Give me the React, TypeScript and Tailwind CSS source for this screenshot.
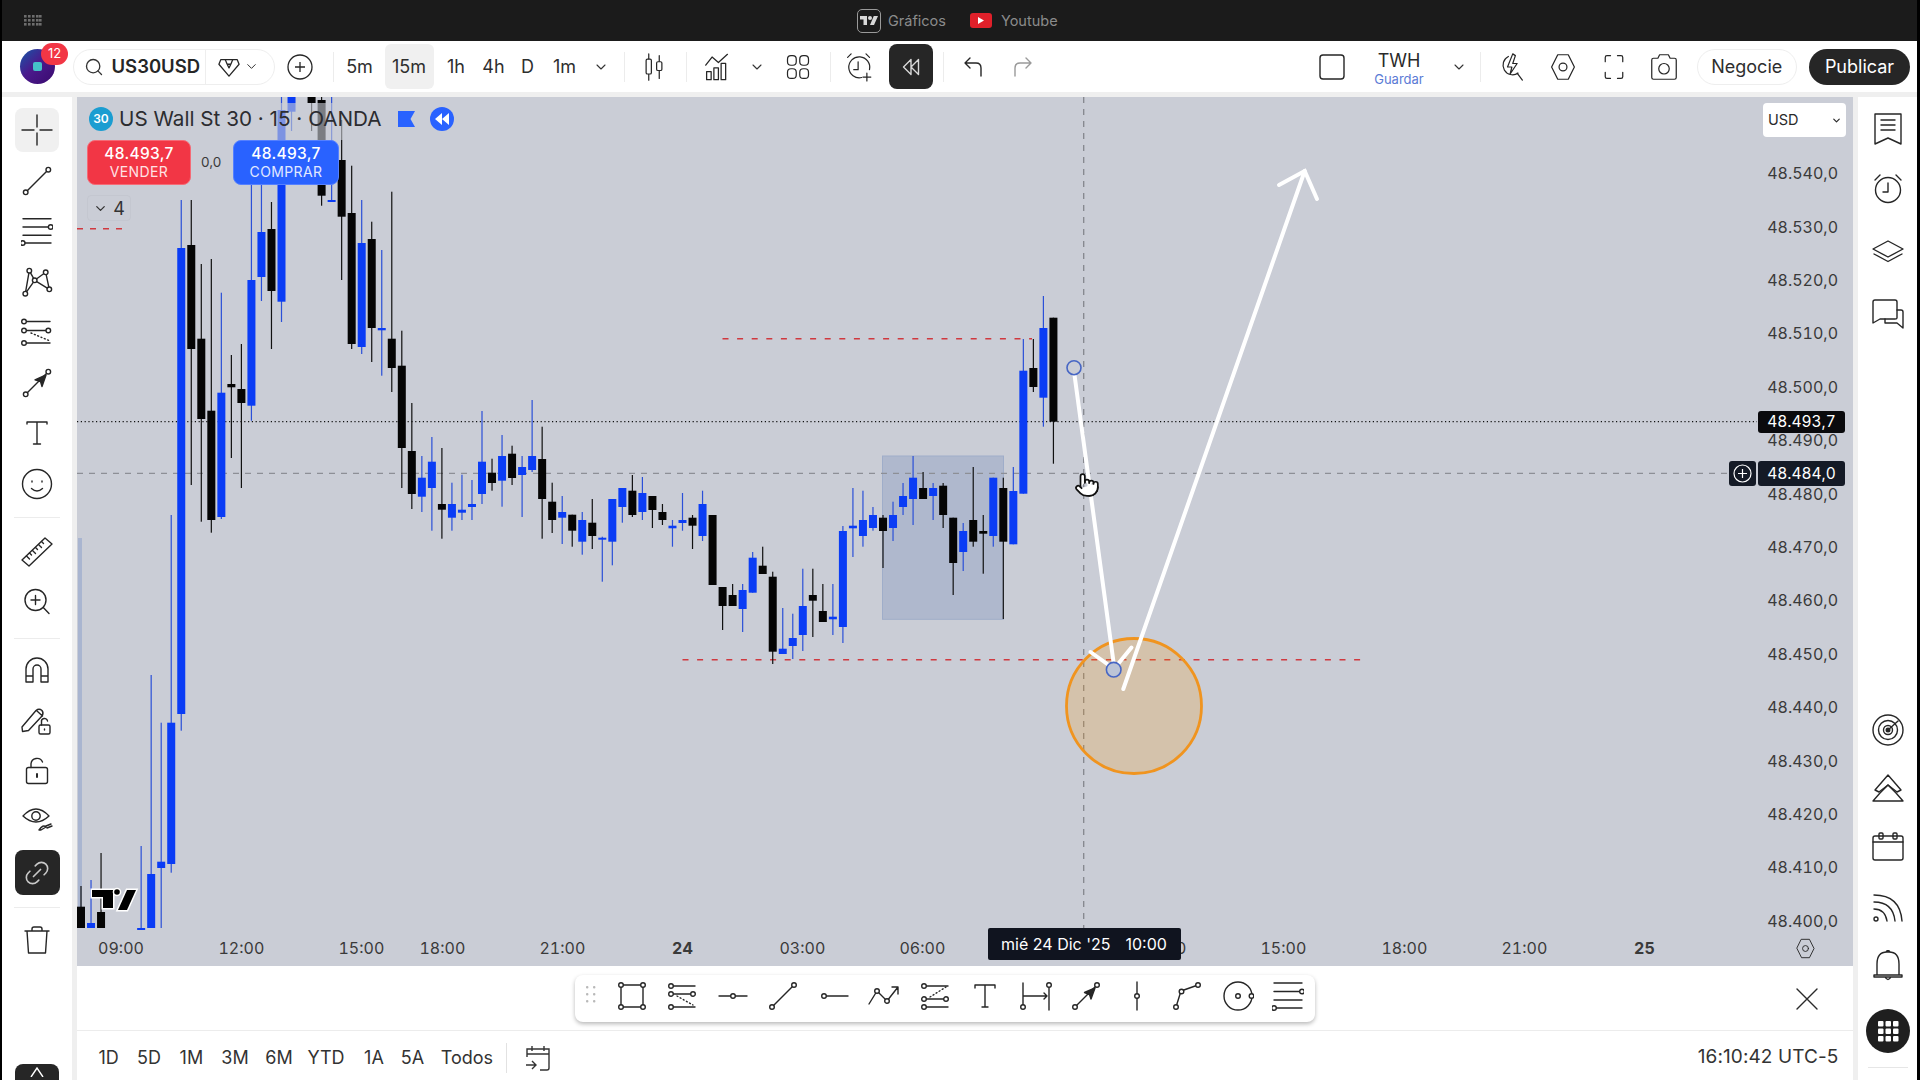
import React from "react";
import { ChevronDown, Pointer, Link2, Search } from "lucide-react";

type Kid = React.ReactNode;
function I({ s = 32, c = "#262626", w = 1.4, vb = "-16 -16 32 32", children }: { s?: number; c?: string; w?: number; vb?: string; children: Kid }) {
  return (
    <svg width={s} height={s} viewBox={vb} fill="none" stroke={c} strokeWidth={w} strokeLinecap="round" strokeLinejoin="round">
      {children}
    </svg>
  );
}
const D = ({ x, y, r = 2.3 }: { x: number; y: number; r?: number }) => <circle cx={x} cy={y} r={r} fill="#fff" />;

const Cross = () => <I><path d="M0-15V-3M0 3V15M-15 0H-3M3 0H15" /></I>;
const Trend = () => <I><path d="M-10 10L10-10" /><D x={-11.3} y={11.3} /><D x={11.3} y={-11.3} /></I>;
const FibLines = () => <I><path d="M-14-12.3H14M-14-4H12M-14 4.3H14M-12 12H14" /><D x={13.7} y={-4} /><D x={-14.3} y={12} /></I>;
const Xabcd = () => <I><path d="M-11.7 11.7L-7.7-11.3L-2.3-1.7L8.7-9.7L12.3 7.3L-2.3-1.7L-11.7 11.7ZM-7.7-11.3" /><D x={-11.7} y={11.7} /><D x={-7.7} y={-11.3} /><D x={-2.3} y={-1.7} /><D x={8.7} y={-9.7} /><D x={12.3} y={7.3} /></I>;
const Gann = () => <I><path d="M-12-10.5H13M-12-1.5H11M-12 11H13" /><path d="M-6 1L12 8.5" strokeDasharray="1 2.6" /><D x={-13} y={-10.5} /><D x={-13} y={-1.5} /><D x={11.3} y={-1.5} /><D x={-13} y={11} /></I>;
const ArrowTool = () => <I><path d="M-10 10L10-10" /><path d="M9-8L5 3.5L3.5-1.5L-2-3.2Z" fill="#262626" /><D x={-11.3} y={11.3} /><D x={11.3} y={-11.3} /></I>;
const TextT = () => <I><path d="M-10-9V-11H10V-9M0-11V11M-3.5 11H3.5" /></I>;
const Smile = () => <I><circle r={14.5} /><path d="M-5-3V-2M5-3V-2M-5.5 4.5Q0 9.5 5.5 4.5" /></I>;
const Ruler = () => <I><path d="M-15 8L8-14L15-8L-8 14Z" /><path d="M-10.5 4L-7.5 7M-7.5 1L-5.5 3M-4.5-1.5L-1.5 1.5M-1.5-4.5L.5-2.5M1.5-7.5L4.5-4.5M4.5-10.5L6.5-8.5" /></I>;
const ZoomI = () => <I><circle cx={-1.5} cy={-2} r={10.5} /><path d="M6.3 5.5L12 11.5M-1.5-6.5V2.5M-6-2H3" /></I>;
const Magnet = () => <I><path d="M-11 12V-1A11 11 0 0 1 11-1V12H4V-1A4 4 0 0 0-4-1V12ZM-11 6H-4M4 6H11" /></I>;
const PencilLock = () => <I><path d="M-15 7L-1-9.5Q2-12 5-9.5Q7-7 5-4L-8.5 10.5L-14.5 11.5ZM0-9L5.5-4" /><rect x={2} y={5} width={11} height={9} rx={1.5} /><path d="M4.5 5V2A3 3 0 0 1 10.5 1" /><path d="M7.5 9V10" /></I>;
const Lock = () => <I><rect x={-10.5} y={-3.5} width={21} height={16} rx={2} /><path d="M-6-3.5V-7A6 6 0 0 1 5.5-9" /><path d="M0 3V6" strokeWidth={2} /></I>;
const Eye = () => <I><path d="M-14-3Q-1-17 12-3Q-1 9-14-3Z" /><circle cx={-1} cy={-3} r={4.2} /><path d="M2 11Q6 5 9 8L4 11ZM9 7L14 5M10 9L15 7" /></I>;
const Trash = () => <I><path d="M-12-9H12M-10-9L-8.5 13H8.5L10-9M-5-9V-11Q-5-13-3-13H3Q5-13 5-11V-9" /></I>;

const Watch = () => <I><path d="M-13-15H13V15L0 9L-13 15Z" /><path d="M-7-9H7M-7-4H7M-7 1H7" /></I>;
const AlarmI = () => <I><circle cy={1} r={12.5} /><path d="M0-6V3H-5M-13-9L-8-14M13-9L8-14" /></I>;
const Layers = () => <I><path d="M0-10L15-2L0 6L-15-2Z" /><path d="M-14 3L0 10.5L14 3" /></I>;
const Chat = () => <I><path d="M-15-12Q-15-14-13-14H7Q9-14 9-12V4Q9 5 7 5H-8L-15 9Z" /><path d="M9-4H13Q15-4 15-2V14L9 9H-3V5" /></I>;
const Radar = () => <I><circle r={15} /><circle r={9.5} /><circle r={4.5} /><circle r={1.8} fill="#262626" /><path d="M0 0L10-9" /></I>;
const Peaks = () => <I><path d="M-15 14L-8 6L0-2L8 6L15 14M-15 14H15" /><path d="M-13 3L0-12L13 3L9 5L0-2L-9 5Z" /></I>;
const Cal = () => <I><rect x={-15} y={-10} width={30} height={24} rx={2} /><path d="M-15-4H15" /><rect x={-9} y={-13} width={4} height={6} rx={1} /><rect x={5} y={-13} width={4} height={6} rx={1} /></I>;
const Signal = () => <I><circle cx={-12} cy={12} r={2} /><path d="M-14 2Q-3 2-1 14M-14-5Q5-5 7 14M-14-12Q12-12 14 14" /></I>;
const Bell = () => <I><path d="M-11 9V-2Q-11-14-1-14H1Q11-14 11-2V9ZM-14 9H14V11H-14ZM-3 11Q0 16 3 11M-2-14Q0-17 2-14" /></I>;
const DotsGrid = () => <svg width={24} height={24} viewBox="0 0 24 24" fill="#fff"><rect x="2" y="2" width="5.5" height="5.5" rx="1" /><rect x="9.5" y="2" width="5.5" height="5.5" rx="1" /><rect x="17" y="2" width="5.5" height="5.5" rx="1" /><rect x="2" y="9.5" width="5.5" height="5.5" rx="1" /><rect x="9.5" y="9.5" width="5.5" height="5.5" rx="1" /><rect x="17" y="9.5" width="5.5" height="5.5" rx="1" /><rect x="2" y="17" width="5.5" height="5.5" rx="1" /><rect x="9.5" y="17" width="5.5" height="5.5" rx="1" /><rect x="17" y="17" width="5.5" height="5.5" rx="1" /></svg>;

const Gem = () => <I s={22} vb="-12 -12 24 24"><path d="M-9-8H9L11-3L0 10L-11-3Z" /><path d="M-4-8L-2-3L0 1L2-3L4-8M-2-3H2" /></I>;
const CandleI = () => <I><path d="M-6-15V15M6-13V13" /><rect x={-9} y={-9} width={6} height={17} rx={1.5} fill="#fff" /><rect x={3} y={-6} width={6} height={10} rx={1.5} fill="#fff" /></I>;
const ChartI = () => <I><path d="M-13-2L-6-11L1-5L11-14" /><rect x={-12} y={5} width={5} height={9} /><rect x={-4} y={1} width={5} height={13} /><rect x={4} y={-4} width={5} height={18} /></I>;
const Four = () => <I><rect x={-12} y={-13} width={10} height={11} rx={4} /><rect x={2} y={-13} width={10} height={11} rx={4} /><rect x={-12} y={2} width={10} height={11} rx={4} /><rect x={2} y={2} width={10} height={11} rx={4} /></I>;
const AlarmPlus = () => <I><path d="M3 12A12 12 0 1 1 12 3" /><path d="M-1-6V3H-6M-13-11L-9-15M12-11L8-15M9 7V16M4.5 11.5H13.5" /></I>;
const Rewind = () => <svg width={22} height={22} viewBox="0 0 22 22" fill="none" stroke="#d8d8d8" strokeWidth={1.4} strokeLinejoin="round"><path d="M11 3.5L3.5 11L11 18.5ZM18.5 3.5L11 11L18.5 18.5Z" /></svg>;
const Undo = ({ c = "#262626" }: { c?: string }) => <I s={24} c={c} vb="-12 -12 24 24"><path d="M-8-4L-3-9M-8-4L-3 1M-8-4H3Q8-4 8 1V9" /></I>;
const Redo = ({ c = "#9a9a9a" }: { c?: string }) => <I s={24} c={c} vb="-12 -12 24 24"><path d="M8-4L3-9M8-4L3 1M8-4H-3Q-8-4-8 1V9" /></I>;
const Bolt = () => <I><path d="M8 7A11 11 0 1 1 -3-12M7 7L13 15" /><path d="M2-15L-4 0H1L-1 8L7-4H2L5-13Z" fill="#fff" /></I>;
const Hex = ({ s = 32 }: { s?: number }) => <I s={s}><path d="M-6-14H6L13 0L6 14H-6L-13 0Z" /><circle r={4.5} /></I>;
const Full = () => <I><path d="M-10-6V-11Q-10-13-8-13H-4M4-13H8Q10-13 10-11V-6M10 6V11Q10 13 8 13H4M-4 13H-8Q-10 13-10 11V6" /></I>;
const Camera = () => <I><path d="M-14-8Q-14-10-12-10H-7L-5-14H5L7-10H12Q14-10 14-8V12Q14 14 12 14H-12Q-14 14-14 12Z" /><circle cy={2} r={6} /></I>;

const B1 = () => <I><rect x={-11} y={-11} width={22} height={22} /><D x={-11} y={-11} /><D x={11} y={-11} /><D x={-11} y={11} /><D x={11} y={11} /></I>;
const B2 = () => <I><path d="M-11-10H13M-11-2H11M-11 11H13" /><path d="M-5 0L11 9" strokeDasharray="1 2.6" /><D x={-11} y={-10} /><D x={-11} y={-2} /><D x={11} y={-2} /><D x={-11} y={11} /></I>;
const B3 = () => <I><path d="M-14 0H14" /><D x={0} y={0} /></I>;
const B4 = () => <I><path d="M-11 11L11-11" /><D x={-11} y={11} /><D x={11} y={-11} /></I>;
const B5 = () => <I><path d="M-10 0H14" /><D x={-10} y={0} /></I>;
const B6 = () => <I><path d="M-15 8L-7-5L3 5L14-9M8-9H14V-2" /><D x={-7} y={-5} /><D x={3} y={5} /></I>;
const B7 = () => <I><path d="M-11-10H13M-11 3H11M-11 11H13" /><path d="M-5 1L11-9" strokeDasharray="1 2.6" /><D x={-11} y={-10} /><D x={-11} y={3} /><D x={11} y={3} /><D x={-11} y={11} /></I>;
const B8 = () => <I><path d="M-10-8V-11H10V-8M0-11V11M-3 11H3" /></I>;
const B9 = () => <I><path d="M-13-13V9M13-8V14M-12 0H11M8-3L11 0L8 3" /><D x={-13} y={11} /><D x={13} y={-11} /></I>;
const B10 = () => <I><path d="M-11 11L11-11" /><path d="M9-8L5 3L3.5-1.5L-1.5-3.5Z" fill="#262626" /><D x={-11} y={11} /><D x={11} y={-11} /></I>;
const B11 = () => <I><path d="M0-14V14" /><D x={0} y={0} /></I>;
const B12 = () => <I><path d="M-11 11L-6-5L11-11" /><D x={-11} y={11} /><D x={-5.5} y={-4.5} /><D x={11} y={-11} /></I>;
const B13 = () => <I><circle r={14} /><D x={0} y={0} /><D x={13.5} y={0} /></I>;
const B14 = () => <I><path d="M-14-13H14M-14-4.5H12M-14 4H14M-12 12H14" /><D x={14} y={-4.5} /><D x={-14} y={12} /></I>;

type C = [string, number, number, number, number];
const candles: Record<number, C> = {
  0: ["k", 886, 906.7, 928, 928], 1: ["b", 880, 923, 928, 928], 2: ["k", 853, 912, 928, 928],
  6: ["b", 846, 928, 928, 928], 7: ["b", 675, 874, 928, 928], 8: ["b", 722.7, 861.7, 868, 928], 9: ["b", 515, 722.7, 864, 872.7],
  10: ["b", 200, 248, 714, 730.7], 11: ["k", 200, 245, 349, 485], 12: ["k", 264, 338.7, 419, 521.7], 13: ["k", 259, 410.7, 520, 532.7],
  14: ["b", 292.7, 392.7, 517, 519], 15: ["k", 355, 384, 387.3, 458], 16: ["k", 344, 389, 403, 488], 17: ["b", 185, 280, 405.7, 420.7],
  18: ["b", 185, 232, 277, 301], 19: ["k", 202, 229, 291, 349], 20: ["b", 97, 110, 301.7, 322], 21: ["b", 97, 97, 111.7, 131],
  23: ["k", 97, 97, 103, 131], 24: ["k", 97, 100, 195.7, 205.7], 25: ["b", 97, 200, 200, 200],
  26: ["k", 120, 160, 216.7, 280], 27: ["k", 165.7, 213, 344, 349], 28: ["b", 200, 243, 347, 354], 29: ["k", 221.7, 239, 328, 362],
  30: ["b", 250, 328, 330.3, 375.7], 31: ["k", 191.7, 338.7, 368, 392], 32: ["k", 330.7, 365.7, 448, 488], 33: ["k", 403, 451, 494, 509],
  34: ["b", 456, 477.7, 496.7, 512], 35: ["b", 437, 461.7, 488, 530.7], 36: ["k", 448, 504, 509.7, 538.7], 37: ["b", 482.7, 504, 517.7, 530.7],
  38: ["b", 474.7, 509.7, 512.7, 520], 39: ["b", 480, 504, 507, 520], 40: ["b", 411, 461.7, 494, 504], 41: ["k", 458.7, 472.7, 483, 490.7],
  42: ["b", 435, 456, 480.7, 506.7], 43: ["k", 445.7, 453.7, 478, 485], 44: ["b", 456, 467, 475, 517], 45: ["b", 400, 456, 470, 472],
  46: ["k", 426.7, 459, 499, 538.7], 47: ["k", 482.7, 501.7, 520, 533], 48: ["b", 496, 512, 517.7, 544], 49: ["k", 514.7, 514.7, 530.7, 546.7],
  50: ["b", 512, 520, 541.7, 554.7], 51: ["k", 499, 522.7, 536, 549], 52: ["b", 536.7, 537.7, 539.5, 581.7], 53: ["b", 499, 499, 541.7, 565.3],
  54: ["b", 488, 488, 507, 522.7], 55: ["k", 475, 490.7, 515, 517], 56: ["b", 477, 493, 512, 520], 57: ["k", 496, 496, 510, 528],
  58: ["k", 504, 512, 520, 525], 59: ["b", 520, 525.7, 528.3, 546.7], 60: ["b", 493, 520, 523, 530.7], 61: ["k", 515, 517.7, 525.7, 549],
  62: ["b", 490.7, 504, 536, 541], 63: ["k", 515, 515, 585, 585], 64: ["k", 587, 587, 606, 630], 65: ["k", 584, 595, 606, 606],
  66: ["b", 584, 590, 609, 632], 67: ["b", 552, 557.7, 592.7, 592.7], 68: ["k", 546.7, 565.7, 574, 574], 69: ["k", 571.7, 576.7, 651.7, 664],
  70: ["b", 608, 648.7, 654, 654], 71: ["b", 613.7, 638, 646, 659], 72: ["b", 568.7, 606, 635, 651], 73: ["k", 568.7, 595, 600.7, 637],
  74: ["k", 584, 611, 622, 622], 75: ["b", 584, 616.7, 619.3, 635], 76: ["b", 526, 531, 627, 643], 77: ["b", 488, 525.7, 528.3, 557],
  78: ["b", 490.7, 520, 536, 546.7], 79: ["b", 507, 515, 528, 530.7], 80: ["k", 515, 517.7, 531, 568], 81: ["b", 501.7, 515, 528, 541],
  82: ["b", 483, 496, 507, 515], 83: ["b", 456, 477.7, 499, 525], 84: ["k", 472, 488, 499, 499], 85: ["b", 483, 488, 496, 520],
  86: ["k", 483, 485.7, 515, 528], 87: ["k", 517.7, 517.7, 563, 595], 88: ["b", 523, 531, 552, 571], 89: ["k", 467, 520, 541.7, 546.7],
  90: ["k", 515, 531, 533.7, 573.7], 91: ["b", 477.7, 477.7, 536, 546.7], 92: ["k", 477.7, 488, 541.7, 619], 93: ["b", 467, 491, 544.3, 544.3],
  94: ["b", 339, 370.7, 493.7, 493.7], 95: ["k", 339, 368, 387, 392], 96: ["b", 296, 328, 397.7, 426.7], 97: ["k", 317.7, 317.7, 421.7, 463.7],
};

function Chart() {
  return (
    <svg className="absolute inset-0" width={1776} height={869} viewBox="77 97 1776 869">
      <rect x={78} y={538} width={4} height={390} fill="#a9b5d0" />
      <rect x={882.5} y={456} width={121} height={163.3} fill="#7f93bd" fillOpacity={0.36} stroke="#9fadc9" strokeWidth={1} />
      <path d="M77 421.7H1757" stroke="#111" strokeWidth={1.2} strokeDasharray="1.2 2.6" />
      <path d="M77 473.3H1727" stroke="#8d8f96" strokeWidth={1.3} strokeDasharray="6 6" />
      <path d="M1083.7 97V928" stroke="#84868d" strokeWidth={1.3} strokeDasharray="6 6" />
      <path d="M77 228.7H122" stroke="#d0393f" strokeWidth={1.6} strokeDasharray="6 7" />
      <path d="M722.5 338.7H1032" stroke="#d0393f" strokeWidth={1.6} strokeDasharray="6 8.6" />
      <path d="M682.5 659.7H1363" stroke="#d0393f" strokeWidth={1.6} strokeDasharray="6 8.6" />
      {Object.entries(candles).map(([k, [col, wt, bt, bb, wb]]) => {
        const x = 81 + Number(k) * 10.025;
        const fill = col === "b" ? "#0a3cf5" : "#050505";
        const wick = col === "b" ? "#2b50d8" : "#111";
        return (
          <g key={k}>
            <rect x={x - 0.6} y={wt} width={1.2} height={wb - wt} fill={wick} />
            <rect x={x - 4} y={bt} width={8} height={Math.max(bb - bt, 2)} fill={fill} />
          </g>
        );
      })}
      <circle cx={1134} cy={706} r={67.5} fill="#ff9800" fillOpacity={0.2} stroke="#f0941f" strokeWidth={2.8} />
      <g stroke="#fff" strokeWidth={4} strokeLinecap="round" fill="none">
        <path d="M1074.5 375L1113.5 662" />
        <path d="M1090.5 652L1110 666M1131.5 647.5L1118 664" />
        <path d="M1123.3 689L1304.7 171" />
        <path d="M1279 185L1304.7 171L1317 199" />
      </g>
      <circle cx={1074} cy={367.7} r={7} fill="#cacdd6" stroke="#4766c4" strokeWidth={1.6} />
      <circle cx={1113.7} cy={669.7} r={7.3} fill="#bcc4d6" stroke="#4766c4" strokeWidth={1.6} />
      <g stroke="#fff" strokeWidth={3} paintOrder="stroke" fill="#000">
        <path d="M92 890H113V908H103V897H92Z" />
        <path d="M118 910L127 890H136L127 910Z" />
        <circle cx={117} cy={892} r={2.8} />
      </g>
    </svg>
  );
}

const prices = ["48.540,0", "48.530,0", "48.520,0", "48.510,0", "48.500,0", "48.490,0", "48.480,0", "48.470,0", "48.460,0", "48.450,0", "48.440,0", "48.430,0", "48.420,0", "48.410,0", "48.400,0"];
const times = [
  ["09:00", "ml-[4px]"], ["12:00", "ml-[40.4px]"], ["15:00", "ml-[40px]"], ["18:00", "ml-[1px]"], ["21:00", "ml-[40px]"], ["24", "ml-[40px] font-bold"], ["03:00", "ml-[40px]"],
  ["06:00", "ml-[40px]"], ["12:00", "ml-[161px]"], ["15:00", "ml-[40px]"], ["18:00", "ml-[41px]"], ["21:00", "ml-[40px]"], ["25", "ml-[40px] font-bold"],
];
const bottomTools = [B1, B2, B3, B4, B5, B6, B7, B8, B9, B10, B11, B12, B13, B14];
const ranges = [
  ["1D", "w-[30px] ml-[16.7px]"], ["5D", "w-[30px] ml-[10.3px]"], ["1M", "w-[36px] ml-[9.4px]"], ["3M", "w-[36px] ml-[7.6px]"], ["6M", "w-[36px] ml-[8px]"], ["YTD", "w-[44px] ml-[7px]"], ["1A", "w-[30px] ml-[11px]"], ["5A", "w-[30px] ml-[8.5px]"], ["Todos", "w-[58px] ml-[10.5px]"],
];

function Slot({ cls, children }: { cls: string; children: Kid }) {
  return <div className={`flex items-center justify-center shrink-0 ${cls}`}>{children}</div>;
}
const VBar = ({ cls }: { cls: string }) => <div className={`w-px h-[30px] bg-[#ececec] shrink-0 ${cls}`} />;
const Chev = ({ cls }: { cls: string }) => <Slot cls={cls}><ChevronDown size={16} strokeWidth={1.6} color="#333" /></Slot>;

export default function App() {
  return (
    <div className="w-[1920px] h-[1080px] overflow-hidden flex flex-col bg-[#efefef] border-l-2 border-r-[3px] border-black text-[#2a2a2a] font-['Inter','Liberation_Sans',sans-serif]">
      {/* window bar */}
      <div className="h-[41px] shrink-0 bg-[#1b1b1b] flex items-center">
        <svg className="ml-[22px]" width={18} height={12} viewBox="0 0 18 12" fill="#6d6d6d">
          {[0, 4, 8].map((y) => [0, 4, 8, 12, 15].map((x) => <rect key={`${x}-${y}`} x={x} y={y} width={2.6} height={2.6} />))}
        </svg>
        <div className="ml-[815px] w-[24px] h-[24px] rounded-[5px] border border-[#9a9a9a] flex items-center justify-center">
          <svg width={18} height={11} viewBox="0 0 36 22" fill="#d8d8d8"><path d="M14 20H7V9H0V2H14ZM28 20H20L27.5 2H36Z" /><circle cx={20} cy={6} r={4} /></svg>
        </div>
        <span className="ml-[7px] text-[14.5px] text-[#8b8b8b]">Gráficos</span>
        <div className="ml-[24px] w-[22px] h-[15px] rounded-[3px] bg-[#e0202a] flex items-center justify-center">
          <svg width={6} height={7} viewBox="0 0 6 7" fill="#fff"><path d="M0 0L6 3.5L0 7Z" /></svg>
        </div>
        <span className="ml-[9px] text-[14.5px] text-[#8b8b8b]">Youtube</span>
      </div>

      {/* top toolbar */}
      <div className="h-[51px] shrink-0 bg-white flex items-center text-[18px] text-[#2e2e2e]">
        <div className="ml-[17.5px] w-[35px] h-[35px] relative shrink-0">
          <div className="w-full h-full rounded-full bg-[linear-gradient(135deg,#1558a8_0%,#4a1a8c_45%,#3a0a6e_100%)] flex items-center justify-center">
            <div className="w-[9px] h-[9px] rounded-[2px] bg-[#45c0c8]" />
          </div>
          <div className="absolute left-[21.5px] -top-[6px] w-[27px] h-[22px] rounded-full bg-[#f23645] text-white text-[13px] flex items-center justify-center">12</div>
        </div>
        <div className="ml-[18px] w-[202px] h-[36px] shrink-0 rounded-full border border-[#eeeeee] flex items-center">
          <Search className="ml-[10px]" size={20} strokeWidth={1.6} color="#333" />
          <span className="ml-[8px] font-semibold text-[18.5px] w-[91px] text-[#262626]">US30USD</span>
          <div className="ml-[2px] w-px h-full bg-[#eeeeee]" />
          <div className="ml-[12px]"><Gem /></div>
          <ChevronDown className="ml-[4px]" size={15} strokeWidth={1.6} color="#333" />
        </div>
        <Slot cls="ml-[12px] w-[27px]"><svg width={26} height={26} viewBox="0 0 26 26" fill="none" stroke="#262626" strokeWidth={1.3}><circle cx={13} cy={13} r={12} /><path d="M13 8V18M8 13H18" /></svg></Slot>
        <VBar cls="ml-[19px]" />
        <Slot cls="ml-[12px] w-[28px]">5m</Slot>
        <Slot cls="ml-[11px] w-[49px] h-[45px] rounded-md bg-[#f0f0f0]">15m</Slot>
        <Slot cls="ml-[7px] w-[31px]">1h</Slot>
        <Slot cls="ml-[6.5px] w-[31px]">4h</Slot>
        <Slot cls="ml-[6.5px] w-[24px]">D</Slot>
        <Slot cls="ml-[9px] w-[32px]">1m</Slot>
        <Chev cls="ml-[12px] w-[17px]" />
        <VBar cls="ml-[14px]" />
        <Slot cls="ml-[15.5px] w-[28px]"><CandleI /></Slot>
        <VBar cls="ml-[18px]" />
        <Slot cls="ml-[16px] w-[29px]"><ChartI /></Slot>
        <Chev cls="ml-[17px] w-[16px]" />
        <Slot cls="ml-[19px] w-[28px]"><Four /></Slot>
        <VBar cls="ml-[18px]" />
        <Slot cls="ml-[14px] w-[28px]"><AlarmPlus /></Slot>
        <Slot cls="ml-[16px] w-[44px] h-[45px] rounded-lg bg-[#262626]"><Rewind /></Slot>
        <VBar cls="ml-[10px]" />
        <Slot cls="ml-[17px] w-[24px]"><Undo /></Slot>
        <Slot cls="ml-[26px] w-[24px]"><Redo /></Slot>

        <Slot cls="ml-auto w-[26px]"><svg width={26} height={26} viewBox="0 0 26 26" fill="none" stroke="#262626" strokeWidth={1.4}><rect x={1} y={1} width={24} height={24} rx={3} /></svg></Slot>
        <div className="ml-[29px] w-[50px] shrink-0 flex flex-col items-center leading-none pt-[5px]">
          <span className="text-[18px] text-[#2a2a2a]">TWH</span>
          <span className="mt-[3px] text-[13px] text-[#5b7bd5]">Guardar</span>
        </div>
        <Chev cls="ml-[27px] w-[16px]" />
        <VBar cls="ml-[13px]" />
        <Slot cls="ml-[15.5px] w-[28px]"><Bolt /></Slot>
        <Slot cls="ml-[24.5px] w-[28px]"><Hex /></Slot>
        <Slot cls="ml-[23px] w-[28px]"><Full /></Slot>
        <Slot cls="ml-[22px] w-[28px]"><Camera /></Slot>
        <Slot cls="ml-[18.5px] w-[100.5px] h-[36px] rounded-full border border-[#eeeeee]">Negocie</Slot>
        <Slot cls="ml-[12px] mr-[7px] w-[101px] h-[36px] rounded-full bg-[#262626] text-white">Publicar</Slot>
      </div>

      <div className="flex-1 min-h-0 flex pt-[5px]">
        {/* left tools */}
        <aside className="w-[70px] shrink-0 bg-white flex flex-col items-center">
          <Slot cls="mt-[11px] w-[44px] h-[44px] rounded-lg bg-[#f0f0f0]"><Cross /></Slot>
          <div className="mt-[3.5px] w-full flex flex-col items-center">
            {[Trend, FibLines, Xabcd, Gann, ArrowTool, TextT, Smile].map((Ic, i) => (
              <Slot key={i} cls="h-[50.5px]"><Ic /></Slot>
            ))}
          </div>
          <div className="mt-[8px] w-[46px] h-px bg-[#ececec]" />
          <Slot cls="mt-[9.5px] h-[49px]"><Ruler /></Slot>
          <Slot cls="h-[50px]"><ZoomI /></Slot>
          <div className="mt-[11px] w-[46px] h-px bg-[#ececec]" />
          <Slot cls="mt-[6px] h-[50px]"><Magnet /></Slot>
          <Slot cls="h-[50px]"><PencilLock /></Slot>
          <Slot cls="h-[52px]"><Lock /></Slot>
          <Slot cls="h-[45.5px]"><Eye /></Slot>
          <Slot cls="mt-[8px] w-[45px] h-[45px] rounded-lg bg-[#262626]"><Link2 size={30} strokeWidth={1.3} color="#c9c9c9" className="-rotate-45" /></Slot>
          <div className="mt-[12px] w-[46px] h-px bg-[#ececec]" />
          <Slot cls="mt-[7px] h-[50px]"><Trash /></Slot>
          <Slot cls="mt-auto w-[44px] h-[16px] rounded-t-lg bg-[#262626] items-start pt-[3px]"><svg width={16} height={10} viewBox="0 0 16 10" fill="none" stroke="#fff" strokeWidth={1.4}><path d="M2 10L8 1L14 10" /></svg></Slot>
        </aside>

        {/* centre */}
        <main className="ml-[5px] w-[1776px] shrink-0 flex flex-col">
          <div className="relative h-[869px] bg-[#cacdd6] overflow-hidden shrink-0">
            <Chart />

            {/* legend */}
            <div className="absolute left-[11px] top-[6px] w-[265px] h-[37px] bg-[#cacdd6]/60" />
            <div className="absolute left-[12px] top-[10px] flex items-center h-[24px]">
              <div className="w-[24px] h-[24px] rounded-full bg-[#1b9dd1] text-white text-[12px] font-semibold flex items-center justify-center">30</div>
              <span className="ml-[6px] text-[20.7px] text-[#2c2c30] whitespace-nowrap">US Wall St 30 · 15 · OANDA</span>
              <svg className="ml-[16px]" width={17} height={16} viewBox="0 0 17 16" fill="#2962ff"><path d="M0 0H17L12.5 8L17 16H0Z" /></svg>
              <div className="ml-[15px] w-[24px] h-[24px] rounded-full bg-[#2962ff] flex items-center justify-center">
                <svg width={14} height={12} viewBox="0 0 14 12" fill="#fff"><path d="M7 0V12L0 6ZM14 0V12L7 6Z" /></svg>
              </div>
            </div>
            <div className="absolute left-[10px] top-[43px] flex items-center">
              <div className="w-[104px] h-[45px] rounded-lg bg-[#f23645] border border-[#f56a76] text-white flex flex-col items-center justify-center leading-none">
                <span className="text-[15.5px] font-medium tracking-[0.3px]">48.493,7</span>
                <span className="mt-[4px] text-[14px] tracking-[0.4px] text-[#ffe3e5]">VENDER</span>
              </div>
              <span className="ml-[10px] w-[22px] text-[13.5px] text-[#3a3a3a]">0,0</span>
              <div className="ml-[10px] w-[106px] h-[45px] rounded-lg bg-[#2962ff] border border-[#5580ff] text-white flex flex-col items-center justify-center leading-none">
                <span className="text-[15.5px] font-medium tracking-[0.3px]">48.493,7</span>
                <span className="mt-[4px] text-[14px] tracking-[0.4px] text-[#e1e9ff]">COMPRAR</span>
              </div>
            </div>
            <div className="absolute left-[10px] top-[98px] w-[44px] h-[26px] rounded border border-[#c4c7d0] flex items-center justify-center gap-[5px] text-[18px] text-[#333]">
              <ChevronDown size={15} strokeWidth={2} />4
            </div>

            {/* price axis */}
            <div className="absolute right-[15px] top-[49.6px] flex flex-col items-end text-[16px] text-[#3a3a3a] tabular-nums">
              {prices.map((p) => (
                <div key={p} className="h-[53.4px] flex items-center">{p}</div>
              ))}
            </div>
            <div className="absolute left-[1686px] top-[6px] w-[83px] h-[34px] rounded bg-white flex items-center text-[14.5px] pl-[5px] pr-[4px] justify-between text-[#2a2a2a]">
              USD<ChevronDown size={11} strokeWidth={2.6} />
            </div>
            <div className="absolute left-[1681px] top-[314px] w-[87px] h-[22px] rounded-[3px] bg-[#0a0a0d] text-white text-[15.5px] tabular-nums flex items-center justify-center">48.493,7</div>
            <div className="absolute left-[1652px] top-[364px] flex items-center">
              <div className="w-[27px] h-[25px] rounded-[3px] bg-[#141a26] flex items-center justify-center">
                <svg width={19} height={19} viewBox="0 0 19 19" fill="none" stroke="#fff" strokeWidth={1.2}><circle cx={9.5} cy={9.5} r={8.5} /><path d="M9.5 5V14M5 9.5H14" /></svg>
              </div>
              <div className="ml-[2px] w-[87px] h-[25px] rounded-[3px] bg-[#141a26] text-white text-[15.5px] tabular-nums flex items-center justify-center">48.484,0</div>
            </div>

            {/* time axis */}
            <div className="absolute left-0 top-[832px] h-[38px] w-full flex items-center text-[16px] text-[#3a3a3a] tabular-nums">
              {times.map(([t, cls], i) => (
                <div key={i} className={`w-[80px] text-center shrink-0 ${cls}`}>{t}</div>
              ))}
            </div>
            <div className="absolute left-[1717.5px] top-[840.5px]"><Hex s={21} /></div>
            <div className="absolute left-[910.5px] top-[831px] w-[193px] h-[32px] rounded-[2px] bg-[#10141f] text-white text-[16px] flex items-center justify-center gap-[15px]">
              <span>mié 24 Dic '25</span><span>10:00</span>
            </div>

            {/* cursor */}
            <div className="absolute left-[997px] top-[375px]">
              <Pointer size={26} strokeWidth={1.6} color="#111" fill="#fff" />
            </div>
          </div>

          {/* drawing strip */}
          <div className="h-[65px] shrink-0 bg-white border-b border-[#ececec] flex items-start">
            <div className="ml-[498px] mt-[9px] w-[740px] h-[47px] rounded-lg bg-white shadow-[0_2px_4px_rgba(0,0,0,0.28)] flex items-center pb-[5px]">
              <div className="w-[31.5px] shrink-0 flex justify-center">
                <svg width={10} height={22} viewBox="0 0 10 22" fill="#b9b9b9">
                  {[1, 8, 15].map((y) => [0, 7].map((x) => <rect key={`${x}${y}`} x={x} y={y} width={2.4} height={2.4} rx={1} />))}
                </svg>
              </div>
              {bottomTools.map((Ic, i) => (
                <Slot key={i} cls="w-[50.5px]"><Ic /></Slot>
              ))}
            </div>
            <Slot cls="ml-[476.5px] mt-[18px] w-[30px] h-[30px]"><svg width={24} height={24} viewBox="0 0 24 24" fill="none" stroke="#2a2a2a" strokeWidth={1.4} strokeLinecap="round"><path d="M2 2L22 22M22 2L2 22" /></svg></Slot>
          </div>

          {/* range bar */}
          <div className="h-[49px] shrink-0 bg-white flex items-center text-[18px] text-[#333] pt-[4px]">
            {ranges.map(([t, cls]) => (
              <div key={t} className={`text-center shrink-0 ${cls}`}>{t}</div>
            ))}
            <div className="ml-[10px] w-px h-[30px] bg-[#e2e2e2]" />
            <Slot cls="ml-[17px]"><svg width={28} height={30} viewBox="0 0 28 30" fill="none" stroke="#333" strokeWidth={1.4}><path d="M3 14V6H25V25Q25 27 23 27H16M3 11H25M8 3V8M20 3V8M2 22H12M8 18L12 22L8 26" /></svg></Slot>
            <span className="ml-auto mr-[14.5px] whitespace-nowrap text-[19px] tracking-[0.1px]">16:10:42 UTC-5</span>
          </div>
        </main>

        {/* right tools */}
        <aside className="ml-[5px] w-[59px] shrink-0 bg-white flex flex-col items-center">
          <Slot cls="h-[63px]"><Watch /></Slot>
          <Slot cls="h-[57px]"><AlarmI /></Slot>
          <Slot cls="h-[67px]"><Layers /></Slot>
          <Slot cls="h-[59px]"><Chat /></Slot>
          <Slot cls="mt-auto h-[60px]"><Radar /></Slot>
          <Slot cls="h-[54px]"><Peaks /></Slot>
          <Slot cls="h-[64px]"><Cal /></Slot>
          <Slot cls="h-[57px]"><Signal /></Slot>
          <Slot cls="h-[61px]"><Bell /></Slot>
          <Slot cls="mt-[13px] w-[44px] h-[44px] rounded-full bg-[#1f1f1f]"><DotsGrid /></Slot>
          <div className="mt-[14px] mb-[12px] w-[40px] h-px bg-[#e6e6e6]" />
        </aside>
      </div>
    </div>
  );
}
